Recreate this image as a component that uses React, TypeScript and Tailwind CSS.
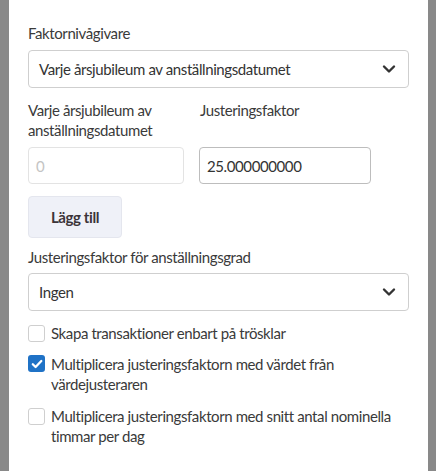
import React from "react";

const Chevron = () => (
  <svg width="14" height="10" viewBox="0 0 14 10" className="shrink-0">
    <path d="M2 2.5 L7 7.5 L12 2.5" fill="none" stroke="#333" strokeWidth="2.4" strokeLinecap="round" strokeLinejoin="round" />
  </svg>
);

const Select = ({ value }: { value: string }) => (
  <div className="flex h-[38px] items-center justify-between rounded-[4px] border border-[#cfcfcf] pl-[10px] pr-[12px] text-[#333]">
    <span>{value}</span>
    <Chevron />
  </div>
);

const Box = ({ checked }: { checked?: boolean }) =>
  checked ? (
    <div className="mt-[1px] flex h-[17px] w-[17px] shrink-0 items-center justify-center rounded-[3px] bg-[#1f72c6]">
      <svg width="12" height="10" viewBox="0 0 12 10">
        <path d="M1.8 5.2 L4.6 8 L10.3 2" fill="none" stroke="#fff" strokeWidth="2.3" strokeLinecap="round" strokeLinejoin="round" />
      </svg>
    </div>
  ) : (
    <div className="mt-[2px] h-[17px] w-[17px] shrink-0 rounded-[3px] border border-[#cfcfcf] bg-white" />
  );

export default function App() {
  return (
    <div
      className="flex h-[471px] w-[436px] overflow-hidden bg-[#898989] text-[15px] leading-[20px] tracking-[-0.4px] text-[#3a3a3a]"
      style={{ fontFamily: "Lato, 'Liberation Sans', sans-serif" }}
    >
      <div className="ml-[9px] w-[419px] whitespace-nowrap bg-white px-[19px] pt-[23px]">
        <div>Faktornivågivare</div>
        <div className="mt-[7px]">
          <Select value="Varje årsjubileum av anställningsdatumet" />
        </div>
        <div className="mt-[12px] flex gap-[15px]">
          <div className="w-[156px]">
            <div className="h-[40px]">
              Varje årsjubileum av
              <br />
              anställningsdatumet
            </div>
            <div className="mt-[7px] flex h-[37px] items-center rounded-[4px] border border-[#e3e3e3] px-[7px] text-[#c4c4c4]">
              0
            </div>
          </div>
          <div className="w-[172px]">
            <div className="h-[40px] pl-[1px]">Justeringsfaktor</div>
            <div className="mt-[7px] flex h-[37px] items-center rounded-[4px] border border-[#bdbdbd] px-[7px] text-[#333]">
              25.000000000
            </div>
          </div>
        </div>
        <div className="mt-[12px] flex h-[42px] w-[94px] items-center justify-center rounded-[4px] border border-[#e4e6ee] bg-[#eff1f8] font-bold text-[#3b3439]">
          Lägg till
        </div>
        <div className="mt-[9px]">Justeringsfaktor för anställningsgrad</div>
        <div className="mt-[6px]">
          <Select value="Ingen" />
        </div>
        <div className="mt-[12px] flex gap-[6px]">
          <Box />
          <div>Skapa transaktioner enbart på trösklar</div>
        </div>
        <div className="mt-[11px] flex gap-[6px]">
          <Box checked />
          <div>
            Multiplicera justeringsfaktorn med värdet från
            <br />
            värdejusteraren
          </div>
        </div>
        <div className="mt-[12px] flex gap-[6px]">
          <Box />
          <div>
            Multiplicera justeringsfaktorn med snitt antal nominella
            <br />
            timmar per dag
          </div>
        </div>
      </div>
    </div>
  );
}
